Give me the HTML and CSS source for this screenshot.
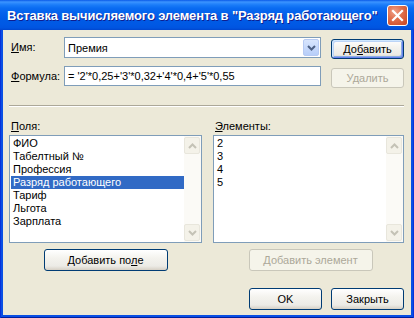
FILE: index.html
```html
<!DOCTYPE html>
<html lang="ru">
<head>
<meta charset="utf-8">
<title>Вставка вычисляемого элемента</title>
<link rel="stylesheet" href="styles.css">
</head>
<body>
<div class="window">
  <div class="titlebar">
    <span class="title">Вставка вычисляемого элемента в "Разряд работающего"</span>
    <span class="close"><svg width="13" height="13" viewBox="0 0 13 13"><path d="M2 2 L11 11 M11 2 L2 11" stroke="#fff" stroke-width="2.2" stroke-linecap="square"/></svg></span>
  </div>
  <div class="client">
    <div class="form-row">
      <span class="lbl"><u>И</u>мя:</span>
      <div class="field combo">
        <span class="val">Премия</span>
        <span class="drop"><svg width="9" height="6" viewBox="0 0 9 6"><path d="M1 1 L4.5 4.5 L8 1" fill="none" stroke="#4D6185" stroke-width="2"/></svg></span>
      </div>
      <button class="btn default">До<u>б</u>авить</button>
    </div>
    <div class="form-row row2">
      <span class="lbl"><u>Ф</u>ормула:</span>
      <div class="field text"><span class="val">= '2'*0,25+'3'*0,32+'4'*0,4+'5'*0,55</span></div>
      <button class="btn disabled">Удалить</button>
    </div>
    <div class="sep"></div>
    <div class="lists">
      <div class="col">
        <span class="lbl list-lbl"><u>П</u>оля:</span>
        <div class="listbox">
          <ul class="items">
            <li>ФИО</li>
            <li>Табелтный №</li>
            <li>Профессия</li>
            <li class="sel">Разряд работающего</li>
            <li>Тариф</li>
            <li>Льгота</li>
            <li>Зарплата</li>
          </ul>
          <div class="scroll">
            <span class="arrow"><svg width="9" height="6" viewBox="0 0 9 6"><path d="M1 5 L4.5 1.5 L8 5" fill="none" stroke="#C4C2B6" stroke-width="2"/></svg></span>
            <span class="track"></span>
            <span class="arrow"><svg width="9" height="6" viewBox="0 0 9 6"><path d="M1 1 L4.5 4.5 L8 1" fill="none" stroke="#C4C2B6" stroke-width="2"/></svg></span>
          </div>
        </div>
        <button class="btn wide">Добавить по<u>л</u>е</button>
      </div>
      <div class="col right">
        <span class="lbl list-lbl"><u>Э</u>лементы:</span>
        <div class="listbox">
          <ul class="items">
            <li>2</li>
            <li>3</li>
            <li>4</li>
            <li>5</li>
          </ul>
          <div class="scroll">
            <span class="arrow"><svg width="9" height="6" viewBox="0 0 9 6"><path d="M1 5 L4.5 1.5 L8 5" fill="none" stroke="#C4C2B6" stroke-width="2"/></svg></span>
            <span class="track"></span>
            <span class="arrow"><svg width="9" height="6" viewBox="0 0 9 6"><path d="M1 1 L4.5 4.5 L8 1" fill="none" stroke="#C4C2B6" stroke-width="2"/></svg></span>
          </div>
        </div>
        <button class="btn wide disabled">Добавить элемент</button>
      </div>
    </div>
    <div class="footer">
      <button class="btn">OK</button>
      <button class="btn">Закрыть</button>
    </div>
  </div>
</div>
</body>
</html>
```
FILE: styles.css
```css
* { box-sizing: border-box; }
html, body { margin: 0; padding: 0; }
body {
  width: 414px;
  height: 318px;
  overflow: hidden;
  font-family: "Liberation Sans", Arial, sans-serif;
  font-size: 11px;
  color: #000;
}
u { text-decoration: underline; text-underline-offset: 1px; }

.window {
  width: 414px;
  height: 318px;
  display: flex;
  flex-direction: column;
  background: #0A4FE4;
  box-shadow: inset 1px 0 #0831D9, inset -1px 0 #0831D9, inset 0 -1px #001EA0;
}

.titlebar {
  height: 30px;
  flex: none;
  display: flex;
  align-items: center;
  justify-content: space-between;
  padding: 0 6px 0 7px;
  background: linear-gradient(to bottom, #0A5AE8 0px, #3D95FF 2px, #2E8BFD 3px, #1A7CF8 5px, #0A6CF2 8px, #0462EC 13px, #005BE6 19px, #0058E4 25px, #0054E0 28px, #0046CF 30px);
}
.title {
  color: #fff;
  font-family: "Liberation Sans", Arial, sans-serif;
  font-weight: bold;
  font-size: 13px;
  letter-spacing: -0.16px;
  text-shadow: 1px 1px 0 #0F1E8F;
  white-space: nowrap;
  margin-top: 1px;
}
.close {
  width: 21px;
  height: 21px;
  flex: none;
  border: 1px solid #fff;
  border-radius: 3px;
  background: radial-gradient(circle at 35% 30%, #F0A088 0%, #E0714F 40%, #C9441F 100%);
  display: flex;
  align-items: center;
  justify-content: center;
  margin-top: 1px;
}

.client {
  flex: 1;
  margin: 0 3px 3px 3px;
  background: #ECE9D8;
  padding: 7px 7px 0 6px;
  display: flex;
  flex-direction: column;
}

.form-row {
  display: grid;
  grid-template-columns: 55px 257px 1fr;
  align-items: start;
  height: 21px;
}
.row2 { margin-top: 8px; height: 20px; }
.lbl {
  padding-left: 2px;
  line-height: 13px;
  margin-top: 4px;
  white-space: nowrap;
}
.field {
  background: #fff;
  border: 1px solid #7F9DB9;
  display: flex;
  align-items: center;
  padding-left: 3px;
  white-space: nowrap;
  overflow: hidden;
}
.combo { height: 21px; justify-content: space-between; padding-right: 1px; }
.text { height: 20px; }
.drop {
  width: 16px;
  height: 17px;
  border: 1px solid #B6CAF3;
  border-radius: 2px;
  background: linear-gradient(to bottom, #D8E5FD, #B7CEF9);
  display: flex;
  align-items: center;
  justify-content: center;
}

.btn {
  font-family: inherit;
  font-size: 11px;
  color: #000;
  height: 21px;
  padding: 0;
  border: 1px solid #003C74;
  border-radius: 3px;
  background: linear-gradient(to bottom, #FFFFFF 0%, #F4F3EE 40%, #ECEBE6 80%, #D6D0C5 100%);
  cursor: default;
}
.form-row .btn { margin-top: 2px; height: 20px; width: 73px; justify-self: end; }
.btn.default {
  box-shadow: inset 1px 1px #CEE7FF, inset -1px -1px #6982EE, inset 2px 2px #BCD4F6, inset -2px -2px #89ADE4;
}
.btn.disabled {
  border-color: #C9C7BA;
  background: #F5F4EA;
  color: #ACA899;
}

.sep {
  height: 2px;
  margin-top: 19px;
  border-top: 1px solid #ACA899;
  border-bottom: 1px solid #fff;
}

.lists {
  display: grid;
  grid-template-columns: 193px 191px;
  column-gap: 11px;
  margin-top: 13px;
}
.col { display: flex; flex-direction: column; }
.right .list-lbl { padding-left: 2px; }
.list-lbl { margin-top: 0; margin-bottom: 2px; }

.listbox {
  height: 108px;
  background: #fff;
  border: 1px solid #7F9DB9;
  display: flex;
}
.items {
  list-style: none;
  margin: 0;
  padding: 1px 0 0 1px;
  flex: 1;
}
.items li {
  height: 13px;
  line-height: 13px;
  padding-left: 2px;
  white-space: nowrap;
}
.items li.sel { background: #316AC5; color: #fff; }

.scroll {
  width: 17px;
  flex: none;
  display: flex;
  flex-direction: column;
  background: #FBFAF6;
  padding: 1px 0;
}
.arrow {
  width: 16px;
  height: 17px;
  border: 1px solid #E8E6DC;
  border-radius: 2px;
  background: #F4F2E9;
  display: flex;
  align-items: center;
  justify-content: center;
}
.track { flex: 1; }

.btn.wide {
  width: 124px;
  height: 22px;
  align-self: center;
  margin-top: 6px;
}
.right .btn.wide { margin-left: 4px; }

.footer {
  display: flex;
  justify-content: flex-end;
  gap: 9px;
  margin-top: 17px;
}
.footer .btn { width: 73px; height: 22px; }
```
